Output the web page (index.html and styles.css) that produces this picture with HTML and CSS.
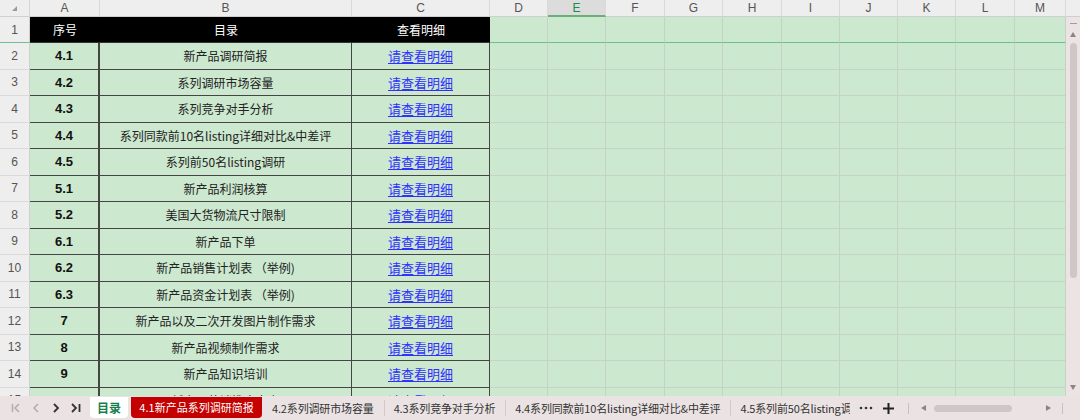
FILE: index.html
```html
<!DOCTYPE html>
<html lang="zh-CN">
<head>
  <meta charset="UTF-8">
  <title>目录</title>
  <link rel="stylesheet" href="styles.css">
</head>
<body>
  <div class="sheet" id="sheet">
    <div class="vscroll">
      <div class="vs-dash"></div>
      <svg class="vs-up" width="6" height="5" viewBox="0 0 6 5"><polygon points="3,0 6,5 0,5" fill="#8a8484"/></svg>
      <div class="vs-thumb"></div>
      <svg class="vs-down" width="6" height="5" viewBox="0 0 6 5"><polygon points="0,0 6,0 3,5" fill="#8a8484"/></svg>
    </div>
  </div>

  <div class="tabs">
    <div class="nav">
      <span class="nav-btn off">
        <svg width="10" height="10" viewBox="0 0 10 10"><path d="M1.5 1v8M8 1L4 5l4 4" fill="none" stroke="#b2abab" stroke-width="1.5"/></svg>
      </span>
      <span class="nav-btn off">
        <svg width="10" height="10" viewBox="0 0 10 10"><path d="M7 1L3 5l4 4" fill="none" stroke="#b2abab" stroke-width="1.5"/></svg>
      </span>
      <span class="nav-btn">
        <svg width="10" height="10" viewBox="0 0 10 10"><path d="M3 1l4 4-4 4" fill="none" stroke="#333" stroke-width="1.8"/></svg>
      </span>
      <span class="nav-btn">
        <svg width="10" height="10" viewBox="0 0 10 10"><path d="M1 1l4 4-4 4M8.5 1v8" fill="none" stroke="#333" stroke-width="1.8"/></svg>
      </span>
    </div>
    <div class="tab home">目录</div>
    <div class="tab current">4.1新产品系列调研简报</div>
    <div class="tab-list">
      <div class="tab">4.2系列调研市场容量</div>
      <div class="tab">4.3系列竞争对手分析</div>
      <div class="tab">4.4系列同款前10名listing详细对比&amp;中差评</div>
      <div class="tab">4.5系列前50名listing调研</div>
    </div>
    <div class="more">
      <svg width="14" height="4" viewBox="0 0 14 4"><circle cx="2" cy="2" r="1.3" fill="#333"/><circle cx="7" cy="2" r="1.3" fill="#333"/><circle cx="12" cy="2" r="1.3" fill="#333"/></svg>
    </div>
    <div class="add">
      <svg width="11" height="11" viewBox="0 0 11 11"><path d="M5.5 0v11M0 5.5h11" stroke="#222" stroke-width="2"/></svg>
    </div>
    <div class="hsep"></div>
    <svg class="hs-left" width="5" height="6" viewBox="0 0 5 6"><polygon points="5,0 5,6 0,3" fill="#8a8484"/></svg>
    <div class="hs-thumb"></div>
    <svg class="hs-right" width="5" height="6" viewBox="0 0 5 6"><polygon points="0,0 5,3 0,6" fill="#8a8484"/></svg>
    <div class="hsep end"></div>
  </div>

<script>
  var sheet = document.getElementById('sheet');
  var letters = ['A', 'B', 'C', 'D', 'E', 'F', 'G', 'H', 'I', 'J', 'K', 'L', 'M'];
  var rows = [
    ['4.1', '新产品调研简报'],
    ['4.2', '系列调研市场容量'],
    ['4.3', '系列竞争对手分析'],
    ['4.4', '系列同款前10名listing详细对比&中差评'],
    ['4.5', '系列前50名listing调研'],
    ['5.1', '新产品利润核算'],
    ['5.2', '美国大货物流尺寸限制'],
    ['6.1', '新产品下单'],
    ['6.2', '新产品销售计划表 （举例)'],
    ['6.3', '新产品资金计划表 （举例)'],
    ['7', '新产品以及二次开发图片制作需求'],
    ['8', '新产品视频制作需求'],
    ['9', '新产品知识培训'],
    ['10.1', '新产品营销推广方案']
  ];

  function cell(cls, text) {
    var d = document.createElement('div');
    d.className = cls;
    if (text) d.textContent = text;
    sheet.appendChild(d);
    return d;
  }

  // column headers
  var corner = cell('corner');
  corner.innerHTML = '<svg width="5" height="5" viewBox="0 0 5 5"><polygon points="5,0 5,5 0,5" fill="#9a9a9a"/></svg>';
  for (var i = 0; i < letters.length; i++) {
    cell(letters[i] == 'E' ? 'col-head active' : 'col-head', letters[i]);
  }
  cell('col-head blank');

  // title row
  cell('row-head freeze', '1');
  cell('th', '序号');
  cell('th', '目录');
  cell('th', '查看明细');
  for (var i = 3; i < letters.length; i++) {
    cell('cell freeze');
  }

  // data rows
  for (var r = 0; r < rows.length; r++) {
    cell('row-head', String(r + 2));
    cell('td num', rows[r][0]);
    cell('td name', rows[r][1]);
    var c = cell('td');
    var a = document.createElement('a');
    a.className = 'link';
    a.href = '#';
    a.textContent = '请查看明细';
    c.appendChild(a);
    for (var i = 3; i < letters.length; i++) {
      cell('cell');
    }
  }
</script>
</body>
</html>
```

FILE: styles.css
```css
* {
  box-sizing: border-box;
}

body {
  margin: 0;
  width: 1080px;
  height: 420px;
  overflow: hidden;
  background-color: #ebe3e3;
  font-family: "Noto Sans CJK SC", "Liberation Sans", sans-serif;
  color: #333;
}

.sheet {
  display: grid;
  grid-template-columns: 30px 70px 252px 138px 58px 58px 59px 58px 59px 58px 58px 58px 59px 51px 14px;
  grid-template-rows: 17px 26px repeat(13, 26.5px) 26px;
  height: 396px;
  overflow: hidden;
  background-color: #cce8cf;
}

.sheet > div {
  display: flex;
  align-items: center;
  justify-content: center;
  white-space: nowrap;
  overflow: hidden;
}

.corner {
  background-color: #eeeeee;
  border-right: 1px solid #d6d6d6;
  border-bottom: 1px solid #cfcfcf;
}

.col-head {
  background-color: #eeeeee;
  color: #555;
  font-family: "Liberation Sans", sans-serif;
  font-size: 12px;
  border-right: 1px solid #dadada;
  border-bottom: 1px solid #cfcfcf;
}
.col-head.active {
  background-color: #dcdcdc;
  color: #1f8a4e;
  border-bottom: 2px solid #6aae78;
}
.col-head.blank {
  border-right: 0;
}

.row-head {
  background-color: #eeeeee;
  color: #555;
  font-family: "Liberation Sans", sans-serif;
  font-size: 12px;
  border-right: 1px solid #cfcfcf;
  border-bottom: 1px solid #dadada;
}

.cell {
  border-right: 1px solid #c4d3c6;
  border-bottom: 1px solid #c4d3c6;
}

.freeze {
  border-bottom: 1px solid #6cc08f;
}

.th {
  background-color: #000;
  color: #fff;
  font-size: 12px;
  border-bottom: 1px solid #333;
}

.td {
  font-size: 12px;
  color: #222;
  border-right: 1px solid #454545;
  border-bottom: 1px solid #454545;
}
.td.num {
  font-family: "Liberation Sans", sans-serif;
  font-weight: bold;
  font-size: 13px;
  color: #111;
  border-right: 2px solid #454545;
}

.link {
  color: #3030ff;
  font-size: 13px;
  text-decoration: underline;
  text-underline-offset: 2px;
}

.vscroll {
  grid-column: 15;
  grid-row: 2 / -1;
  background-color: #ece4e4;
  flex-direction: column;
  justify-content: flex-start !important;
  position: relative;
}
.vs-dash {
  width: 7px;
  height: 1px;
  margin-top: 6px;
  background-color: #a49d9d;
}
.vs-up {
  margin-top: 8px;
}
.vs-thumb {
  width: 7px;
  height: 235px;
  margin-top: 6px;
  border-radius: 4px;
  background-color: #cfc7c7;
}
.vs-down {
  position: absolute;
  top: 368px;
  left: 4px;
}

.tabs {
  display: flex;
  align-items: center;
  height: 24px;
  font-size: 11px;
  color: #333;
}

.nav {
  display: flex;
  padding-left: 6px;
  width: 90px;
}
.nav-btn {
  width: 20px;
  height: 24px;
  display: flex;
  align-items: center;
  justify-content: center;
}

.tab {
  height: 24px;
  line-height: 24px;
  padding: 0 10px;
  white-space: nowrap;
  flex-shrink: 0;
  letter-spacing: -0.15px;
}
.tab.home {
  align-self: flex-start;
  margin-top: 1px;
  height: 21px;
  line-height: 21px;
  width: 38px;
  padding: 0;
  text-align: center;
  background-color: #fff;
  color: #17804a;
  font-weight: bold;
  font-size: 12px;
  letter-spacing: 0;
  border-radius: 0 0 4px 4px;
}
.tab.current {
  align-self: flex-start;
  margin-top: 1px;
  margin-left: 3px;
  height: 21px;
  line-height: 21px;
  width: 131px;
  padding: 0;
  text-align: center;
  background-color: #c40000;
  color: #fff;
  letter-spacing: 0;
  border-radius: 0 0 4px 4px;
}

.tab-list {
  display: flex;
  width: 588px;
  overflow: hidden;
}
.tab-list .tab {
  position: relative;
}
.tab-list .tab + .tab::before {
  content: "";
  position: absolute;
  left: 0;
  top: 4px;
  height: 16px;
  border-left: 1px solid #d2caca;
}

.more {
  width: 24px;
  margin-left: 4px;
  display: flex;
  justify-content: center;
}
.add {
  width: 20px;
  display: flex;
  justify-content: center;
}

.hsep {
  width: 1px;
  height: 11px;
  margin-left: 10px;
  background-color: #c9c1c1;
}
.hsep.end {
  margin-left: 11px;
}
.hs-left {
  margin-left: 12px;
}
.hs-thumb {
  width: 78px;
  height: 7px;
  margin-left: 8px;
  border-radius: 4px;
  background-color: #cfc7c7;
}
.hs-right {
  margin-left: 34px;
}
```
